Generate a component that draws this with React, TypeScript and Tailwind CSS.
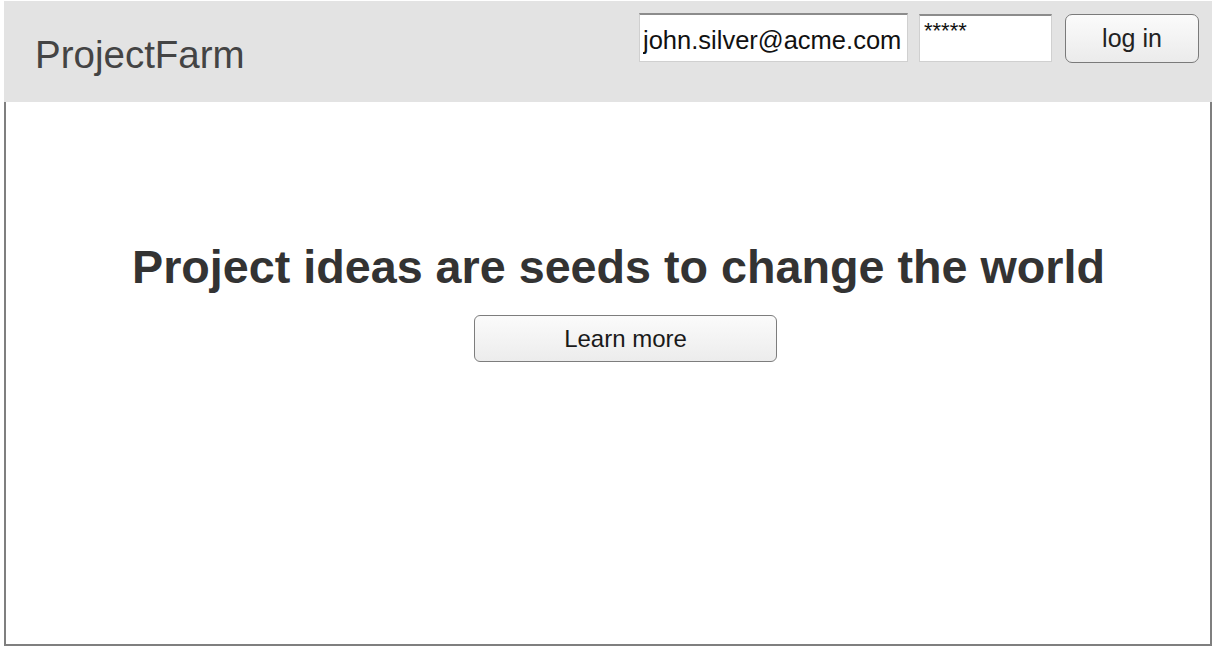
import React from "react";

const font = { fontFamily: '"Liberation Sans", Arial, sans-serif' };

const App: React.FC = () => {
  return (
    <div className="w-[1218px] h-[652px] bg-white pt-[1px] pl-[4px]" style={font}>
      <div className="w-[1208px] h-[645px] flex flex-col">
        {/* Top bar */}
        <header className="h-[101px] bg-[#e3e3e3] flex justify-between items-start pl-[31px] pr-[13px] pt-[12px]">
          <h1 className="mt-[23px] text-[38.5px] leading-[38px] text-[#444] font-normal">ProjectFarm</h1>

          <div className="flex items-start">
            <input
              readOnly
              value="john.silver@acme.com"
              className="w-[269px] h-[49px] bg-white border border-[#d0d0d0] border-t-2 border-t-[#8c8c8c] px-[3px] pt-[4px] text-[25.5px] text-[#111] outline-none"
            />
            <input
              readOnly
              value="*****"
              className="ml-[11px] w-[133px] h-[48px] mt-[1px] bg-white border border-[#d0d0d0] border-t-2 border-t-[#8c8c8c] px-[4px] pb-[16px] text-[22px] text-[#111] outline-none"
            />
            <button className="ml-[13px] mt-[1px] w-[134px] h-[49px] rounded-[7px] border border-[#7a7a7a] bg-gradient-to-b from-[#fbfbfb] to-[#ebebeb] text-[25px] text-[#222]">
              log in
            </button>
          </div>
        </header>

        {/* Main */}
        <main className="flex-1 border-2 border-t-0 border-[#7f7f7f] flex flex-col items-center pt-[142px]">
          <h2 className="ml-[21px] text-[46.7px] leading-[46px] font-bold text-[#333]">
            Project ideas are seeds to change the world
          </h2>
          <button className="ml-[35px] mt-[25px] w-[303px] h-[47px] rounded-[6px] border border-[#7d7d7d] bg-gradient-to-b from-[#fbfbfb] to-[#ececec] text-[24px] text-[#1a1a1a]">
            Learn more
          </button>
        </main>
      </div>
    </div>
  );
};

export default App;
